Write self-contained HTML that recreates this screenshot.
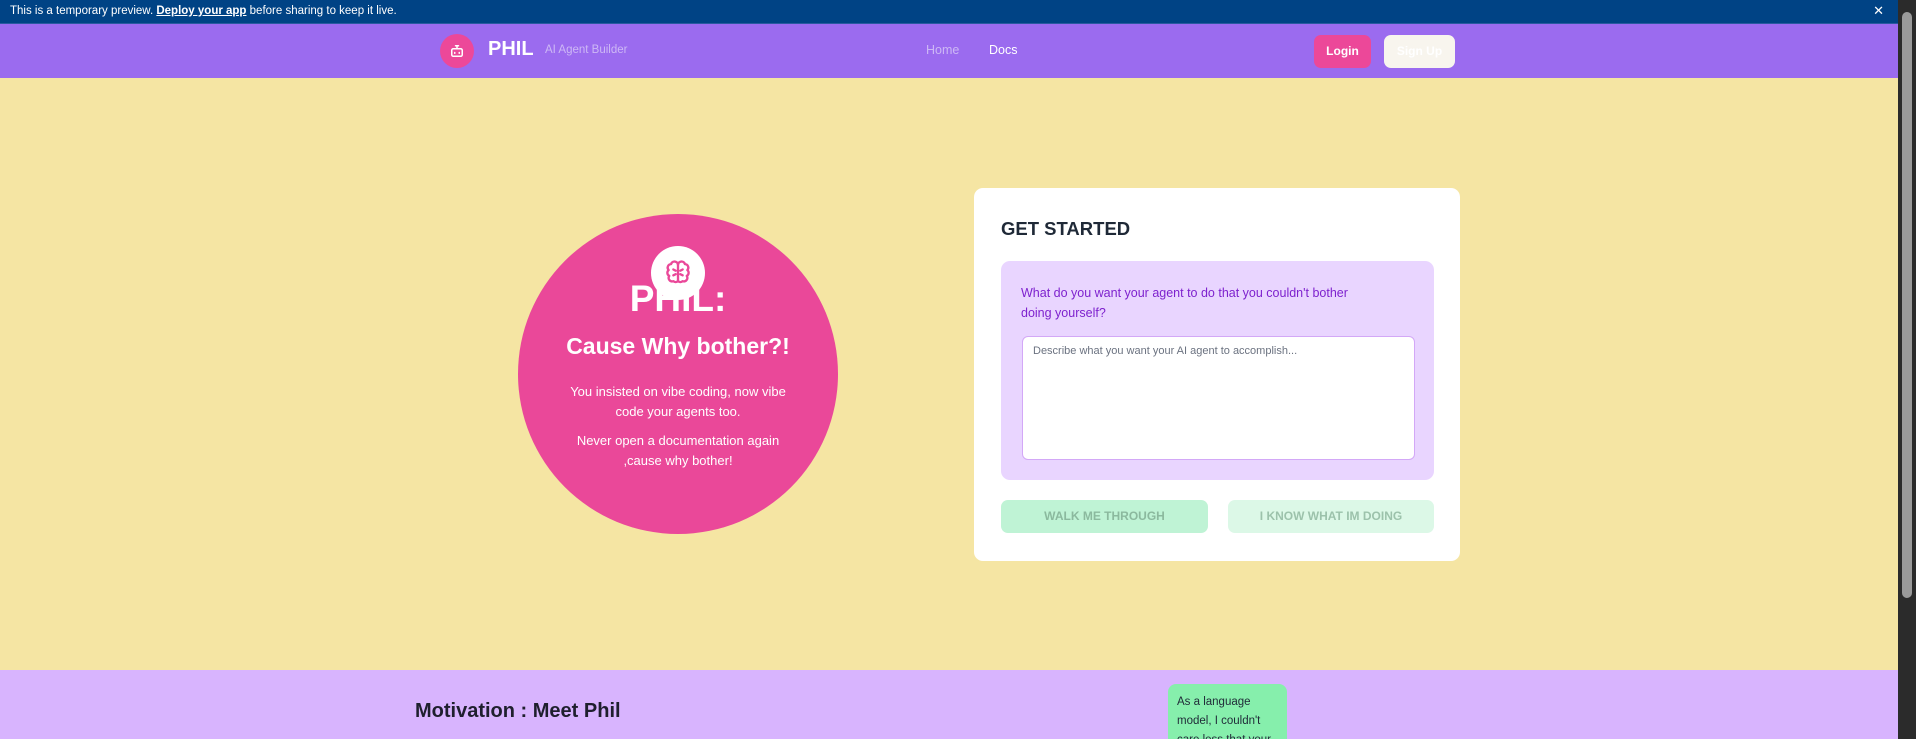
<!DOCTYPE html>
<html><head><meta charset="utf-8"><style>
*{box-sizing:border-box;margin:0;padding:0}
html,body{width:1916px;height:739px;overflow:hidden}
body{font-family:"Liberation Sans","DejaVu Sans",sans-serif;background:#f5e5a3;position:relative}
.abs{position:absolute}
#banner{left:0;top:0;width:1898px;height:24px;background:#004385;color:#fff;font-size:11.5px;line-height:22px;padding-left:10px;border-bottom:1px solid #2a5aa0}
#banner u{font-weight:bold}
#nav{left:0;top:24px;width:1898px;height:54px;background:#9b6bef}
#scroll{left:1898px;top:0;width:18px;height:739px;background:#2b2b2b}
#thumb{left:1902px;top:12px;width:10px;height:586px;background:#9a9a9a;border-radius:5px}
.btn{border-radius:7px;font-size:12px;font-weight:bold;color:#fff;text-align:center;line-height:33px}
#circle{left:518px;top:214px;width:320px;height:320px;border-radius:50%;background:#ea4899;color:#fff;text-align:center}
#card{left:974px;top:188px;width:486px;height:373px;background:#fff;border-radius:9px}
</style></head><body>
<div id="banner" class="abs">This is a temporary preview. <u>Deploy your app</u> before sharing to keep it live.<span style="position:absolute;right:14px;top:0;font-size:13px">✕</span></div>
<div id="nav" class="abs">
 <div class="abs" style="left:440px;top:10px;width:34px;height:34px;border-radius:50%;background:#ec4899"></div>
 <svg class="abs" style="left:448px;top:18px" width="18" height="18" viewBox="0 0 24 24" fill="none" stroke="#fff" stroke-width="2" stroke-linecap="round"><rect x="5" y="9" width="14" height="10" rx="2"/><path d="M12 5v4M10 5h4M9 14v1M15 14v1"/></svg>
 <div class="abs" style="left:488px;top:14px;font-size:20px;font-weight:bold;color:#fff">PHIL</div>
 <div class="abs" style="left:545px;top:20px;font-size:11.5px;color:#cdb8f5">AI Agent Builder</div>
 <div class="abs" style="left:926px;top:19px;font-size:12.5px;color:#cdb8f5">Home</div>
 <div class="abs" style="left:989px;top:19px;font-size:12.5px;color:#fff">Docs</div>
 <div class="abs btn" style="left:1314px;top:11px;width:57px;height:33px;background:#ec4899">Login</div>
 <div class="abs btn" style="left:1384px;top:11px;width:71px;height:33px;background:#f8f5ee">Sign Up</div>
</div>
<div id="scroll" class="abs"></div><div id="thumb" class="abs"></div>
<div id="circle" class="abs">
 <div class="abs" style="left:0;width:320px;top:64px;font-size:37px;font-weight:bold">PHIL:</div>
 <div class="abs" style="left:133px;top:32px;width:54px;height:54px;border-radius:50%;background:#fff"></div>
 <svg class="abs" style="left:146px;top:45px" width="28" height="28" viewBox="0 0 24 24" fill="none" stroke="#ea4899" stroke-width="2" stroke-linecap="round" stroke-linejoin="round"><path d="M12 5a3 3 0 0 0-5.9-.6A3 3 0 0 0 4 9.5a3 3 0 0 0 .5 5A3 3 0 0 0 8 19a3 3 0 0 0 4 0"/><path d="M12 5a3 3 0 0 1 5.9-.6A3 3 0 0 1 20 9.5a3 3 0 0 1-.5 5A3 3 0 0 1 16 19a3 3 0 0 1-4 0"/><path d="M12 5v14M8 9l2 1M16 9l-2 1M8 14l2-1M16 14l-2-1"/></svg>
 <div class="abs" style="left:0;width:320px;top:119px;font-size:23px;font-weight:bold">Cause Why bother?!</div>
 <div class="abs" style="left:45px;width:230px;top:168px;font-size:13px;line-height:20px">You insisted on vibe coding, now vibe code your agents too.</div>
 <div class="abs" style="left:45px;width:230px;top:217px;font-size:13px;line-height:20px">Never open a documentation again ,cause why bother!</div>
</div>
<div id="card" class="abs">
 <div class="abs" style="left:27px;top:30px;font-size:18.5px;font-weight:bold;color:#1f2937">GET STARTED</div>
 <div class="abs" style="left:27px;top:73px;width:433px;height:219px;background:#e9d5ff;border-radius:9px">
  <div class="abs" style="left:20px;top:22px;width:380px;font-size:12.5px;line-height:20px;color:#7e22ce">What do you want your agent to do that you couldn't bother<br>doing yourself?</div>
  <div class="abs" style="left:21px;top:75px;width:393px;height:124px;background:#fff;border:1px solid #d3a8f7;border-radius:6px;padding:8px 10px;font-size:11px;color:#6b7280">Describe what you want your AI agent to accomplish...</div>
 </div>
 <div class="abs" style="left:27px;top:312px;width:207px;height:33px;border-radius:7px;background:#bff3d5;color:#8bb99e;font-size:12px;font-weight:bold;text-align:center;line-height:33px">WALK ME THROUGH</div>
 <div class="abs" style="left:254px;top:312px;width:206px;height:33px;border-radius:7px;background:#dcf8e7;color:#9cc2ab;font-size:12px;font-weight:bold;text-align:center;line-height:33px">I KNOW WHAT IM DOING</div>
</div>
<div class="abs" style="left:0;top:670px;width:1898px;height:69px;background:#d8b4fe">
 <div class="abs" style="left:415px;top:30px;font-size:20px;font-weight:bold;color:#1f1f2e">Motivation : Meet Phil</div>
 <div class="abs" style="left:1168px;top:14px;width:119px;height:70px;background:#86efac;border-radius:8px;padding:9px 9px;font-size:11.5px;line-height:19px;color:#1f2937">As a language model, I couldn't care less that your</div>
</div>
</body></html>
